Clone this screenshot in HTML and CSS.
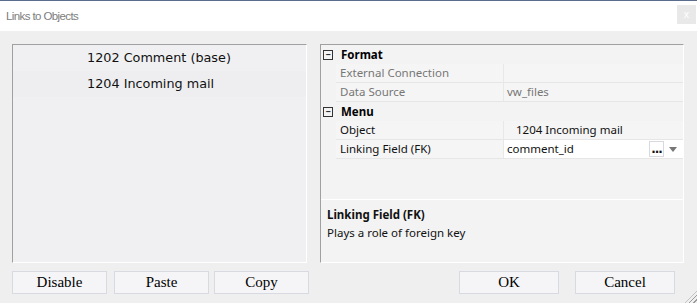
FILE: index.html
```html
<!DOCTYPE html>
<html lang="en">
<head>
    <meta charset="UTF-8">
    <title>Links to Objects</title>
    <link rel="stylesheet" href="styles.css">
</head>
<body>
    <div class="titlebar">
        <span class="title">Links to Objects</span>
        <span class="close">x</span>
    </div>
    <div class="main">
        <div class="panel list">
            <div class="item">1202 Comment (base)</div>
            <div class="item item_b">1204 Incoming mail</div>
        </div>
        <div class="panel props">
            <div class="grid">
                <div class="group"><span class="box">&minus;</span><b>Format</b></div>
                <div class="row off"><span class="k">External Connection</span><span class="v"></span></div>
                <div class="row off"><span class="k">Data Source</span><span class="v">vw_files</span></div>
                <div class="group"><span class="box">&minus;</span><b>Menu</b></div>
                <div class="row"><span class="k">Object</span><span class="v pad">1204 Incoming mail</span></div>
                <div class="row"><span class="k">Linking Field (FK)</span><span class="v edit">comment_id<span class="dots">...</span><span class="arrow"></span></span></div>
            </div>
            <div class="desc">
                <b>Linking Field (FK)</b>
                <span>Plays a role of foreign key</span>
            </div>
        </div>
    </div>
    <div class="bottom">
        <div class="btns">
            <button>Disable</button>
            <button>Paste</button>
            <button class="copy">Copy</button>
        </div>
        <div class="btns">
            <button>OK</button>
            <button>Cancel</button>
        </div>
    </div>
    <div class="grip"></div>
</body>
</html>
```

FILE: styles.css
```css
body {
    margin: 0;
    width: 697px;
    height: 303px;
    background: #efefef;
    font-family: "Noto Sans", "DejaVu Sans", sans-serif;
    overflow: hidden;
    position: relative;
}
.titlebar {
    height: 30px;
    border-top: 1px solid #5b6d8c;
    background: #fff;
    display: flex;
    align-items: center;
    justify-content: space-between;
    padding: 0 1px 0 6px;
}
.title {
    font-family: "Liberation Sans", sans-serif;
    font-size: 11.5px;
    color: #7d7d7d;
    letter-spacing: -0.6px;
}
.close {
    width: 19px;
    height: 19px;
    margin-top: -3px;
    background: #e9e9e9;
    color: #fff;
    font-size: 10px;
    text-align: center;
    line-height: 19px;
}
.main {
    display: flex;
    gap: 13px;
    padding: 13px 13px 0 12px;
}
.panel {
    height: 217px;
    border-top: 1px solid #a0a0a0;
    border-left: 1px solid #a0a0a0;
    border-right: 1px solid #fff;
    border-bottom: 1px solid #fff;
}
.list {
    width: 293px;
    background: #f0f0f2;
    font-family: "DejaVu Sans", sans-serif;
    font-size: 12.8px;
    color: #111;
}
.item {
    height: 26px;
    line-height: 26px;
    padding-left: 74px;
}
.item_b {
    background: #eeeef0;
}
.props {
    width: 362px;
    background: #f3f3f3;
    display: flex;
    flex-direction: column;
    justify-content: space-between;
    font-size: 11.5px;
}
.grid {
    display: flex;
    flex-direction: column;
}
.group {
    height: 19px;
    display: flex;
    align-items: center;
    color: #000;
}
.box {
    width: 8px;
    height: 8px;
    border: 1px solid #333;
    margin: 0 8px 0 2px;
    font-size: 9px;
    line-height: 7px;
    text-align: center;
    font-weight: bold;
    color: #222;
}
.row {
    height: 18px;
    margin-left: 15px;
    border-bottom: 1px solid #e6e6e6;
    display: flex;
    line-height: 18px;
    color: #111;
}
.row.off {
    color: #777;
}
.k {
    width: 163px;
    padding-left: 4px;
    background: #f5f5f5;
    border-right: 1px solid #e8e8e8;
}
.v {
    flex: 1;
    padding-left: 3px;
    background: #f5f5f5;
    display: flex;
}
.v.pad {
    padding-left: 12px;
}
.v.edit {
    background: #fff;
}
.dots {
    width: 15px;
    height: 16px;
    margin: 1px 0 0 auto;
    border: 1px solid #d8d8e0;
    font-family: "DejaVu Sans", sans-serif;
    font-size: 12px;
    font-weight: bold;
    line-height: 14px;
    letter-spacing: -1px;
    text-align: center;
    background: #fff;
    box-sizing: border-box;
}
.arrow {
    width: 0;
    height: 0;
    margin: 7px 6px 0 5px;
    border-left: 4px solid transparent;
    border-right: 4px solid transparent;
    border-top: 5px solid #777;
}
.desc {
    height: 56px;
    border-top: 1px solid #fff;
    padding: 6px 6px 0;
    display: flex;
    flex-direction: column;
    color: #111;
    line-height: 18px;
}
.bottom {
    display: flex;
    justify-content: space-between;
    padding: 8px 22px 0 12px;
}
.btns {
    display: flex;
    gap: 7px;
}
.btns + .btns {
    gap: 16px;
}
button {
    width: 95px;
    height: 23px;
    background: #f5f5f7;
    border: 1px solid #d8dae2;
    font-family: "Liberation Serif", serif;
    font-size: 15px;
    color: #000;
    padding: 0;
}
.copy {
    margin-left: -2px;
}
.btns + .btns button {
    width: 100px;
}
.grip {
    position: absolute;
    right: 0;
    bottom: 0;
    width: 12px;
    height: 12px;
    background: repeating-linear-gradient(135deg, transparent 0 2px, #9a9a9a 2px 3px);
    clip-path: polygon(100% 0, 100% 100%, 0 100%);
}
```
